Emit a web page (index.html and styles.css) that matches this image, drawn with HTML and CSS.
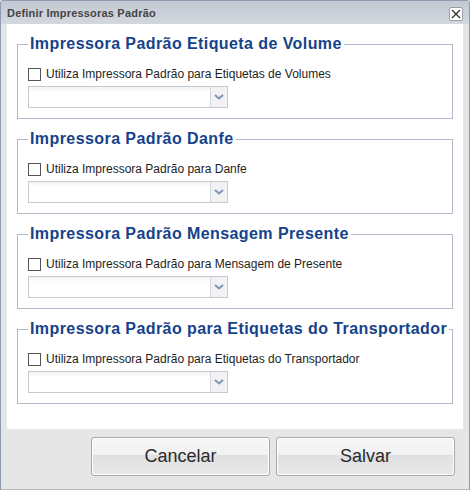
FILE: index.html
```html
<!DOCTYPE html>
<html lang="pt-BR">
<head>
<meta charset="utf-8">
<title>Definir Impressoras Padrão</title>
<link rel="stylesheet" href="styles.css">
</head>
<body>
<div class="win">
  <div class="win-header">
    <span class="win-title">Definir Impressoras Padrão</span>
    <span class="win-close">
      <svg width="10" height="10" viewBox="0 0 10 10"><path d="M1 1L9 9M9 1L1 9" stroke="#333" stroke-width="1.3" fill="none"/></svg>
    </span>
  </div>
  <div class="win-body">
    <fieldset class="fs">
      <legend class="fs-legend">Impressora Padrão Etiqueta de Volume</legend>
      <label class="chk-row"><span class="chk"></span><span class="chk-label">Utiliza Impressora Padrão para Etiquetas de Volumes</span></label>
      <div class="combo"><span class="combo-input"></span><span class="combo-trigger"><svg width="10" height="6" viewBox="0 0 10 6"><path d="M1 1L5 4.5L9 1" stroke="#7f93b5" stroke-width="2" fill="none"/></svg></span></div>
    </fieldset>
    <fieldset class="fs">
      <legend class="fs-legend">Impressora Padrão Danfe</legend>
      <label class="chk-row"><span class="chk"></span><span class="chk-label">Utiliza Impressora Padrão para Danfe</span></label>
      <div class="combo"><span class="combo-input"></span><span class="combo-trigger"><svg width="10" height="6" viewBox="0 0 10 6"><path d="M1 1L5 4.5L9 1" stroke="#7f93b5" stroke-width="2" fill="none"/></svg></span></div>
    </fieldset>
    <fieldset class="fs">
      <legend class="fs-legend">Impressora Padrão Mensagem Presente</legend>
      <label class="chk-row"><span class="chk"></span><span class="chk-label">Utiliza Impressora Padrão para Mensagem de Presente</span></label>
      <div class="combo"><span class="combo-input"></span><span class="combo-trigger"><svg width="10" height="6" viewBox="0 0 10 6"><path d="M1 1L5 4.5L9 1" stroke="#7f93b5" stroke-width="2" fill="none"/></svg></span></div>
    </fieldset>
    <fieldset class="fs">
      <legend class="fs-legend">Impressora Padrão para Etiquetas do Transportador</legend>
      <label class="chk-row"><span class="chk"></span><span class="chk-label">Utiliza Impressora Padrão para Etiquetas do Transportador</span></label>
      <div class="combo"><span class="combo-input"></span><span class="combo-trigger"><svg width="10" height="6" viewBox="0 0 10 6"><path d="M1 1L5 4.5L9 1" stroke="#7f93b5" stroke-width="2" fill="none"/></svg></span></div>
    </fieldset>
  </div>
  <div class="win-footer">
    <button class="btn" type="button">Cancelar</button>
    <button class="btn" type="button">Salvar</button>
  </div>
</div>
</body>
</html>
```

FILE: styles.css
```css
html, body {
  margin: 0;
  padding: 0;
  background: #ffffff;
}
body {
  font-family: "Liberation Sans", Arial, sans-serif;
}
.win {
  box-sizing: border-box;
  width: 470px;
  height: 490px;
  border: 1px solid #8f9bb0;
  border-bottom-color: #b8b8b8;
  border-radius: 3px 3px 0 0;
  background: #e3e5e9;
  display: flex;
  flex-direction: column;
}
.win-header {
  height: 23px;
  flex: none;
  display: flex;
  align-items: center;
  justify-content: space-between;
  padding: 0 6px 0 6px;
  background: linear-gradient(#c3c9d3, #d3d7de);
}
.win-title {
  font-size: 11px;
  font-weight: bold;
  letter-spacing: 0.2px;
  color: #444444;
  margin-top: 1px;
}
.win-close {
  box-sizing: border-box;
  width: 14px;
  height: 14px;
  border: 1px solid #9aa0a8;
  border-radius: 2px;
  background: #ffffff;
  display: flex;
  align-items: center;
  justify-content: center;
  margin-top: 3px;
}
.win-body {
  flex: none;
  height: 405px;
  box-sizing: border-box;
  margin: 0 6px;
  background: #ffffff;
  padding: 10px 10px 0 10px;
}
.fs {
  margin: 0 0 10px 0;
  padding: 12px 10px 10px 10px;
  border: 1px solid #b5b8c8;
  min-width: 0;
}
.fs-legend {
  margin-left: 0;
  padding: 0 2px;
  font-size: 16px;
  line-height: 20px;
  font-weight: bold;
  letter-spacing: 0.42px;
  white-space: nowrap;
  color: #15428b;
}
.chk-row {
  display: flex;
  align-items: flex-start;
  height: 18px;
}
.chk {
  box-sizing: border-box;
  width: 13px;
  height: 13px;
  margin-top: 2px;
  border: 1px solid #555555;
  background: #ffffff;
  flex: none;
}
.chk-label {
  margin-left: 5px;
  font-size: 12px;
  line-height: 16px;
  color: #1e1e1e;
}
.combo {
  box-sizing: border-box;
  margin-top: 2px;
  width: 200px;
  height: 22px;
  border: 1px solid #c6c8d2;
  display: flex;
  background: linear-gradient(#f3f3f3, #ffffff 5px);
}
.combo-input {
  flex: 1;
}
.combo-trigger {
  width: 16px;
  flex: none;
  border-left: 1px solid #d3d5dc;
  background: #f2f2f4;
  display: flex;
  align-items: center;
  justify-content: center;
}
.win-footer {
  flex: 1;
  display: flex;
  justify-content: flex-end;
  align-items: flex-start;
  gap: 6px;
  padding: 8px 14px 0 0;
  background: #e6e6e6;
}
.btn {
  box-sizing: border-box;
  width: 179px;
  height: 39px;
  border: 1px solid #a9a9a9;
  border-radius: 3px;
  background: linear-gradient(#f7f7f7, #f1f1f1 45%, #e0e0e0 46%, #e9e9e9);
  box-shadow: inset 0 0 0 1px #ffffff;
  font-family: "Liberation Sans", Arial, sans-serif;
  font-size: 18px;
  color: #2a2a2a;
  padding: 0;
}
```
